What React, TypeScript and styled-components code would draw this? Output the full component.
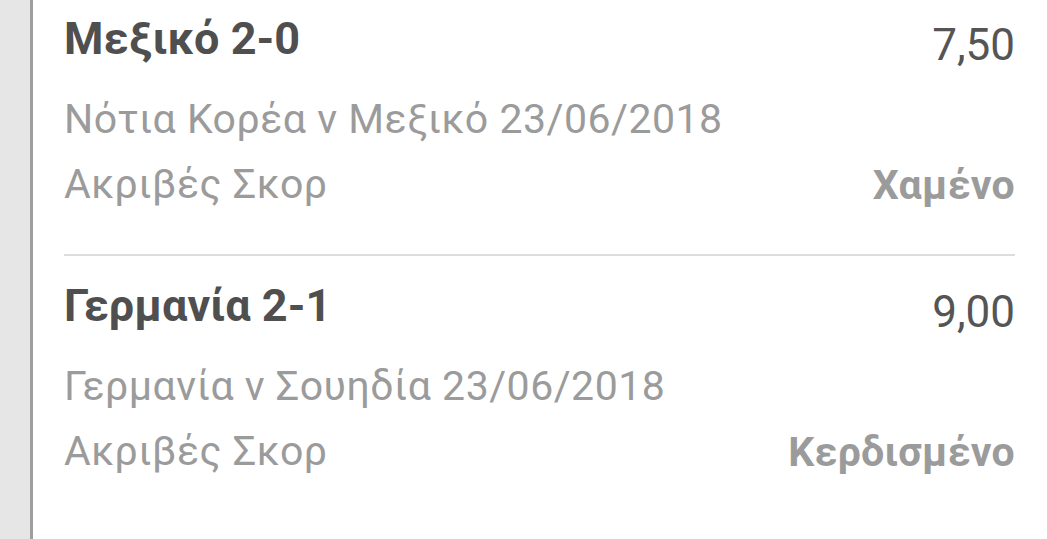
import { createGlobalStyle } from "styled-components";
import styled from "styled-components";

const GlobalStyle = createGlobalStyle`
  html, body {
    margin: 0;
    padding: 0;
    background: #ffffff;
    font-family: Roboto, "Noto Sans", sans-serif;
  }
`;

const Page = styled.div`
  display: flex;
  width: 1047px;
  height: 539px;
  overflow: hidden;
`;

const SidePanel = styled.div`
  width: 30px;
  flex-shrink: 0;
  background: #e6e6e6;
  border-right: 3px solid #9e9e9e;
`;

const Slip = styled.div`
  flex: 1;
  padding: 13px 32px 0 31px;
`;

const Bet = styled.div<{ divided?: boolean }>`
  padding-bottom: 46px;
  border-bottom: ${({ divided }) => (divided ? "2px solid #dddddd" : "none")};
  margin-bottom: ${({ divided }) => (divided ? "24px" : "0")};
`;

const Row = styled.div`
  display: flex;
  justify-content: space-between;
  align-items: baseline;
`;

const Selection = styled.div`
  font-size: 45px;
  line-height: 52px;
  font-weight: 700;
  color: #4f4f4f;
`;

const Odds = styled.div`
  font-size: 44px;
  line-height: 52px;
  color: #555555;
  position: relative;
  top: 6px;
`;

const Meta = styled.div`
  font-size: 41px;
  line-height: 48px;
  letter-spacing: 0.5px;
  color: #9b9b9b;
`;

const Match = styled(Meta)`
  margin-top: 30px;
  margin-bottom: 17px;
`;

const Status = styled.div`
  font-size: 41px;
  line-height: 48px;
  font-weight: 700;
  letter-spacing: 0.3px;
  color: #9b9b9b;
  position: relative;
  top: 1px;
`;

type BetItem = {
  selection: string;
  odds: string;
  match: string;
  market: string;
  status: string;
};

const bets: BetItem[] = [
  {
    selection: "Μεξικό 2-0",
    odds: "7,50",
    match: "Νότια Κορέα ν Μεξικό 23/06/2018",
    market: "Ακριβές Σκορ",
    status: "Χαμένο",
  },
  {
    selection: "Γερμανία 2-1",
    odds: "9,00",
    match: "Γερμανία ν Σουηδία 23/06/2018",
    market: "Ακριβές Σκορ",
    status: "Κερδισμένο",
  },
];

export default function App() {
  return (
    <>
      <GlobalStyle />
      <Page>
        <SidePanel />
        <Slip>
          {bets.map((bet, i) => (
            <Bet key={i} divided={i < bets.length - 1}>
              <Row>
                <Selection>{bet.selection}</Selection>
                <Odds>{bet.odds}</Odds>
              </Row>
              <Match>{bet.match}</Match>
              <Row>
                <Meta>{bet.market}</Meta>
                <Status>{bet.status}</Status>
              </Row>
            </Bet>
          ))}
        </Slip>
      </Page>
    </>
  );
}
